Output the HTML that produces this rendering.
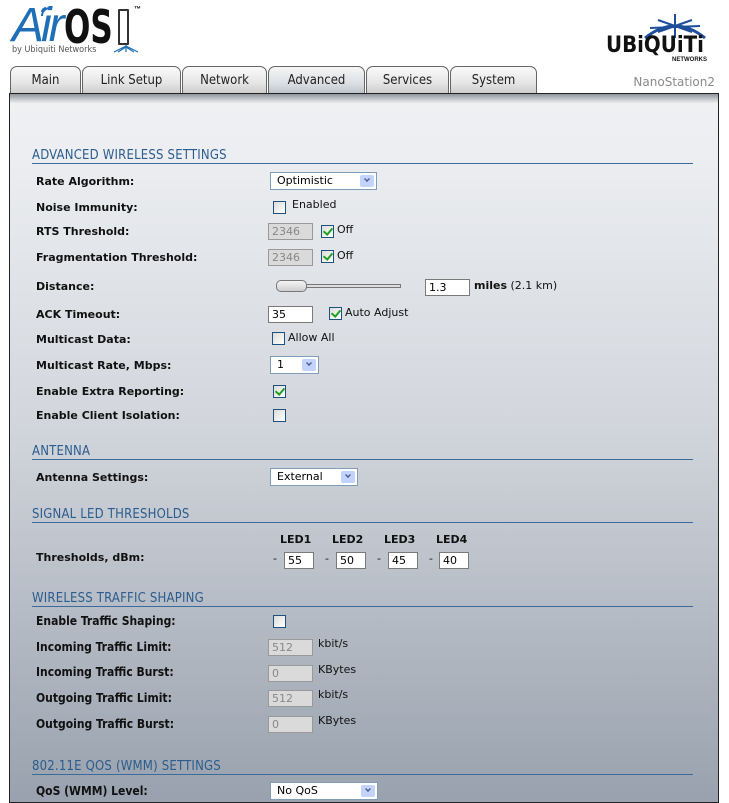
<!DOCTYPE html>
<html><head><meta charset="utf-8"><style>
*{margin:0;padding:0;box-sizing:border-box}
body{width:729px;height:795px;overflow:hidden;background:#fff;position:relative;font-family:"DejaVu Sans","Liberation Sans",sans-serif}
.a{position:absolute}
.tab{position:absolute;top:66px;height:29px;border:1px solid #666;border-bottom:none;border-radius:7px 7px 0 0;background:linear-gradient(#fafafa,#e6e6e6 55%,#c9c9c9);font:13px "DejaVu Sans Condensed","Liberation Sans",sans-serif;color:#222;text-align:center;line-height:27px}
.tab.act{background:linear-gradient(#f6f6f6,#d9dde2 60%,#b4bac2);height:30px}
#box{position:absolute;left:9px;top:93px;width:710px;height:710px;border:1px solid #222;background:linear-gradient(#eff0f2 0px,#eceef1 60px,#d2d6dc 330px,#b8bec7 500px,#99a2ae 702px)}
#strip{position:absolute;left:10px;top:94px;width:708px;height:9px;background:linear-gradient(#8e949b,#c8ccd1 60%,#e8eaed)}
.h{position:absolute;left:32px;width:661px;border-bottom:1px solid #3c6a9a;color:#2c5c8e;font:13px "DejaVu Sans Condensed","Liberation Sans Narrow",sans-serif;height:15px;line-height:13px;letter-spacing:.2px}
.l{position:absolute;left:36px;font:bold 11px "DejaVu Sans","Liberation Sans",sans-serif;color:#111}
.lc{font:bold 12px "DejaVu Sans Condensed","Liberation Sans",sans-serif}
.in{position:absolute;height:17px;border:1px solid #7a7a7a;background:#fff;font:11px "DejaVu Sans",sans-serif;padding-left:3px;line-height:15px;color:#000}
.dis{background:#dadada;color:#888;border-color:#999}
.sel{position:absolute;height:18px;border:1px solid #7f9db9;background:#fff;font:11px "DejaVu Sans",sans-serif;padding-left:6px;line-height:16px}
.sel:after{content:"";position:absolute;right:2px;top:2px;width:14px;height:12px;background:#c3d3fd;border-radius:2px}
.sel i{position:absolute;right:6px;top:3px;width:6px;height:6px;border-right:2px solid #4d6185;border-bottom:2px solid #4d6185;transform:rotate(45deg) scale(.7);z-index:2}
.cb{position:absolute;width:13px;height:13px;border:1px solid #1c5180;background:linear-gradient(135deg,#dcdcd7,#fff)}
.cb.c:after{content:"";position:absolute;left:3px;top:0px;width:4px;height:7px;border-right:2px solid #21a121;border-bottom:2px solid #21a121;transform:rotate(40deg)}
.t{position:absolute;font:11px "DejaVu Sans",sans-serif;color:#111}
</style></head><body>
<div class="a" style="left:12px;top:-2px;font:italic 48px 'Liberation Sans',sans-serif;color:#1e6fb8;letter-spacing:-3px">Air</div>
<svg class="a" style="left:40px;top:2px" width="16" height="16"><path d="M2 14 A8 8 0 0 1 10 6 M2 10 A4 4 0 0 1 6 6" stroke="#1e6fb8" stroke-width="2" fill="none"/></svg>
<div class="a" style="left:64px;top:0px;font:bold 46px 'DejaVu Sans Condensed','Liberation Sans Narrow',sans-serif;color:#111;transform:scaleX(.75);transform-origin:left">OS</div>
<div class="a" style="left:118px;top:9px;width:11px;height:36px;border:2px solid #333;border-radius:1px"></div>
<div class="a" style="left:134px;top:6px;font:bold 7px sans-serif">™</div>
<div class="a" style="left:12px;top:45px;font:9px 'DejaVu Sans Condensed',sans-serif;color:#555">by Ubiquiti Networks</div>
<svg class="a" style="left:112px;top:44px" width="28" height="10"><path d="M2 8 L14 2 L26 8 M6 8 L14 3 L22 8 M14 1 L14 8" stroke="#1e6fb8" stroke-width="1.2" fill="none"/></svg>
<svg class="a" style="left:640px;top:12px" width="70" height="28"><path d="M5 26 Q35 2 65 26" stroke="#1e4f9a" stroke-width="3" fill="none"/><path d="M35 2 L35 26 M18 8 L52 20 M52 8 L18 20 M10 16 L60 14" stroke="#1e4f9a" stroke-width="2"/></svg>
<div class="a" style="left:606px;top:33px;font:bold 22px 'DejaVu Sans Condensed',sans-serif;color:#111;letter-spacing:0">UBiQUiTi</div>
<div class="a" style="left:672px;top:57px;font:bold 6px sans-serif;color:#111">NETWORKS</div>
<div class="tab" style="left:10px;width:71px">Main</div>
<div class="tab" style="left:82px;width:99px">Link Setup</div>
<div class="tab" style="left:182px;width:85px">Network</div>
<div class="tab act" style="left:268px;width:97px">Advanced</div>
<div class="tab" style="left:366px;width:83px">Services</div>
<div class="tab" style="left:450px;width:87px">System</div>
<div class="a" style="right:14px;top:75px;font:12px 'DejaVu Sans',sans-serif;color:#8a8a8a">NanoStation2</div>
<div id="box"></div><div id="strip"></div>

<div class="h" style="top:149px">ADVANCED WIRELESS SETTINGS</div>
<div class="l" style="top:175px">Rate Algorithm:</div>
<div class="sel" style="left:270px;top:172px;width:107px">Optimistic<i></i></div>
<div class="l" style="top:201px">Noise Immunity:</div>
<div class="cb" style="left:273px;top:201px"></div><div class="t" style="left:292px;top:198px">Enabled</div>
<div class="l" style="top:225px">RTS Threshold:</div>
<div class="in dis" style="left:268px;top:223px;width:45px">2346</div>
<div class="cb c" style="left:321px;top:225px"></div><div class="t" style="left:337px;top:223px">Off</div>
<div class="l" style="top:251px">Fragmentation Threshold:</div>
<div class="in dis" style="left:268px;top:249px;width:45px">2346</div>
<div class="cb c" style="left:321px;top:250px"></div><div class="t" style="left:337px;top:249px">Off</div>
<div class="l" style="top:280px">Distance:</div>
<div class="a" style="left:300px;top:284px;width:101px;height:4px;border:1px solid #777;background:#ddd"></div>
<div class="a" style="left:276px;top:280px;width:31px;height:12px;border:1px solid #777;border-radius:5px;background:linear-gradient(#f4f4f4,#cfcfcf)"></div>
<div class="in" style="left:425px;top:279px;width:45px">1.3</div>
<div class="t" style="left:474px;top:279px"><b>miles</b> (2.1 km)</div>
<div class="l" style="top:308px">ACK Timeout:</div>
<div class="in" style="left:268px;top:306px;width:45px">35</div>
<div class="cb c" style="left:329px;top:307px"></div><div class="t" style="left:345px;top:306px">Auto Adjust</div>
<div class="l" style="top:333px">Multicast Data:</div>
<div class="cb" style="left:272px;top:332px"></div><div class="t" style="left:288px;top:331px">Allow All</div>
<div class="l" style="top:359px">Multicast Rate, Mbps:</div>
<div class="sel" style="left:270px;top:356px;width:49px">1<i></i></div>
<div class="l" style="top:385px">Enable Extra Reporting:</div>
<div class="cb c" style="left:273px;top:385px"></div>
<div class="l" style="top:409px">Enable Client Isolation:</div>
<div class="cb" style="left:273px;top:409px"></div>

<div class="h" style="top:445px">ANTENNA</div>
<div class="l" style="top:471px">Antenna Settings:</div>
<div class="sel" style="left:270px;top:468px;width:88px">External<i></i></div>

<div class="h" style="top:508px">SIGNAL LED THRESHOLDS</div>
<div class="t" style="left:280px;top:533px;font-weight:bold">LED1</div>
<div class="t" style="left:332px;top:533px;font-weight:bold">LED2</div>
<div class="t" style="left:384px;top:533px;font-weight:bold">LED3</div>
<div class="t" style="left:436px;top:533px;font-weight:bold">LED4</div>
<div class="l" style="top:551px">Thresholds, dBm:</div>
<div class="t" style="left:273px;top:552px">-</div><div class="in" style="left:284px;top:552px;width:30px">55</div>
<div class="t" style="left:325px;top:552px">-</div><div class="in" style="left:336px;top:552px;width:30px">50</div>
<div class="t" style="left:377px;top:552px">-</div><div class="in" style="left:388px;top:552px;width:30px">45</div>
<div class="t" style="left:429px;top:552px">-</div><div class="in" style="left:439px;top:552px;width:30px">40</div>

<div class="h" style="top:592px">WIRELESS TRAFFIC SHAPING</div>
<div class="l lc" style="top:614px">Enable Traffic Shaping:</div>
<div class="cb" style="left:273px;top:615px"></div>
<div class="l lc" style="top:640px">Incoming Traffic Limit:</div>
<div class="in dis" style="left:268px;top:639px;width:45px">512</div><div class="t" style="left:318px;top:637px">kbit/s</div>
<div class="l lc" style="top:665px">Incoming Traffic Burst:</div>
<div class="in dis" style="left:268px;top:665px;width:45px">0</div><div class="t" style="left:318px;top:663px">KBytes</div>
<div class="l lc" style="top:691px">Outgoing Traffic Limit:</div>
<div class="in dis" style="left:268px;top:690px;width:45px">512</div><div class="t" style="left:318px;top:688px">kbit/s</div>
<div class="l lc" style="top:717px">Outgoing Traffic Burst:</div>
<div class="in dis" style="left:268px;top:716px;width:45px">0</div><div class="t" style="left:318px;top:714px">KBytes</div>

<div class="h" style="top:760px">802.11E QOS (WMM) SETTINGS</div>
<div class="l lc" style="top:784px">QoS (WMM) Level:</div>
<div class="sel" style="left:270px;top:782px;width:108px">No QoS<i></i></div>
</body></html>
